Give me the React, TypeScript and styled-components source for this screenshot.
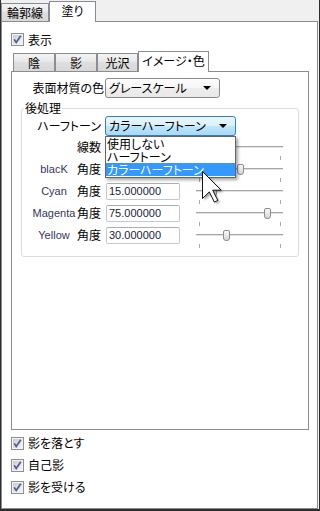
import React from 'react';
import styled, { createGlobalStyle } from 'styled-components';

const GlobalStyle = createGlobalStyle`
  html, body {
    margin: 0;
    padding: 0;
    background: #fff;
  }
  body {
    font-family: "Noto Sans CJK JP", "Noto Sans", sans-serif;
    font-size: 12px;
    color: #000;
    font-feature-settings: "palt" 1;
  }
`;

const Frame = styled.div`
  position: relative;
  width: 320px;
  height: 511px;
  box-sizing: border-box;
  display: flex;
  flex-direction: column;
  background: #f0f0f0;
  border-left: 1px solid #2e2e2e;
  border-right: 1px solid #2e2e2e;
  border-bottom: 2px solid #2e2e2e;
  overflow: hidden;
`;

const TabStrip = styled.div<{ $pad: number }>`
  display: flex;
  align-items: flex-end;
  flex-shrink: 0;
  height: ${(p) => (p.$pad ? 20 : 21)}px;
  padding-left: ${(p) => p.$pad}px;
`;

const Tab = styled.div<{ $w: number; $active?: boolean }>`
  position: relative;
  box-sizing: border-box;
  width: ${(p) => p.$w}px;
  height: ${(p) => (p.$active ? 21 : 18)}px;
  margin-bottom: ${(p) => (p.$active ? -1 : 0)}px;
  z-index: ${(p) => (p.$active ? 1 : 0)};
  border: 1px solid #898c95;
  border-bottom: none;
  background: ${(p) =>
    p.$active ? '#fff' : 'linear-gradient(#f4f4f4, #e8e8e8 45%, #dedede 50%, #d8d8d8)'};
  display: flex;
  justify-content: center;
  align-items: ${(p) => (p.$active ? 'flex-start' : 'center')};
  padding-top: ${(p) => (p.$active ? 2 : 0)}px;
  font-size: 12px;
  line-height: 14px;
  white-space: nowrap;
`;

const Panel = styled.div`
  flex: 1;
  margin-right: 1px;
  border: 1px solid #898c95;
  background: #fff;
  display: flex;
  flex-direction: column;
  padding-left: 9px;
`;

const CheckRow = styled.div<{ $h: number }>`
  display: flex;
  align-items: center;
  gap: 4px;
  height: ${(p) => p.$h}px;
  line-height: 14px;
`;

const ShowRow = styled(CheckRow)`
  margin-top: 11px;
`;

const InnerTabs = styled.div`
  margin-top: 5px;
  display: flex;
  flex-direction: column;
`;

const InnerPanel = styled.div`
  width: 298px;
  height: 359px;
  box-sizing: border-box;
  border: 1px solid #898c95;
  background: #fff;
  display: flex;
  flex-direction: column;
`;

const SurfaceRow = styled.div`
  display: flex;
  align-items: center;
  margin-top: 6px;
`;

const SurfaceLabel = styled.div`
  width: 92px;
  text-align: right;
  line-height: 14px;
`;

const Select = styled.div<{ $w: number; $focus?: boolean }>`
  position: relative;
  box-sizing: border-box;
  width: ${(p) => p.$w}px;
  height: 20px;
  margin-left: ${(p) => (p.$focus ? 0 : 1)}px;
  border: 1px solid ${(p) => (p.$focus ? '#3c7fb1' : '#8a8a8a')};
  border-radius: 3px;
  background: ${(p) =>
    p.$focus
      ? 'linear-gradient(#eaf6fd, #d9f0fc 50%, #bee6fd 50%, #a7d9f5)'
      : 'linear-gradient(#fdfdfd, #f6f6f6 50%, #ededed 50%, #e9e9e9)'};
  display: flex;
  align-items: center;
  padding-left: 3px;
  line-height: 14px;
  white-space: nowrap;
`;

const Arrow = styled.span`
  position: absolute;
  right: 8px;
  top: 7px;
  width: 0;
  height: 0;
  border-left: 4px solid transparent;
  border-right: 4px solid transparent;
  border-top: 4px solid #000;
`;

const Group = styled.fieldset`
  margin: 3px 0 0 9px;
  width: 278px;
  min-width: 0;
  box-sizing: border-box;
  border: 1px solid #d5dfe5;
  border-radius: 3px;
  padding: 1px 0 10px 0;
`;

const GroupLegend = styled.legend`
  margin-left: 2px;
  padding: 0 1px;
  font-size: 12px;
  line-height: 14px;
`;

/* label | gap | field | gap | slider */
const GroupGrid = styled.div`
  display: grid;
  grid-template-columns: 79px 4px 75px 16px 87px;
  grid-template-rows: 20px repeat(5, 22px);
  align-items: center;
`;

const LabelCell = styled.div`
  grid-column: 1;
  display: flex;
  justify-content: flex-end;
  align-items: center;
  line-height: 14px;
  white-space: nowrap;
`;

const ColorName = styled.span`
  width: 44px;
  margin-left: 10px;
  text-align: center;
  font-family: "Liberation Sans", Arial, sans-serif;
  font-size: 11px;
  color: #353560;
`;

const AngleText = styled.span`
  width: 25px;
  text-align: right;
`;

const SelectWrap = styled.div`
  grid-column: 3 / 6;
  position: relative;
  justify-self: start;
`;

const DropList = styled.div`
  position: absolute;
  left: 0;
  top: 20px;
  z-index: 5;
  width: 131px;
  box-sizing: border-box;
  border: 1px solid #646464;
  background: #fff;
  box-shadow: 2px 2px 3px rgba(0, 0, 0, 0.35);
  padding-bottom: 1px;
`;

const DropItem = styled.div<{ $sel?: boolean }>`
  height: 13px;
  line-height: 13px;
  padding-left: 1px;
  white-space: nowrap;
  background: ${(p) => (p.$sel ? '#3399ff' : 'transparent')};
  color: ${(p) => (p.$sel ? '#fff' : '#000')};
`;

const NumInput = styled.input`
  grid-column: 3;
  justify-self: end;
  box-sizing: border-box;
  width: 74px;
  min-width: 0;
  height: 17px;
  margin: 0;
  padding: 0 0 0 2px;
  border: 1px solid #c3c7cf;
  border-top-color: #abadb3;
  border-radius: 2px;
  background: #fff;
  font-family: "Liberation Sans", Arial, sans-serif;
  font-size: 11px;
  line-height: 15px;
  color: #1c1c3c;
  outline: none;
`;

const SliderBox = styled.div`
  grid-column: 5;
  position: relative;
  width: 87px;
  height: 22px;
`;

const Track = styled.div`
  position: absolute;
  left: 0;
  right: 0;
  top: 10px;
  height: 1px;
  background: #a6a6a6;
  border-bottom: 1px solid #e2e2e2;
`;

const Tick = styled.div<{ $x: number }>`
  position: absolute;
  left: ${(p) => p.$x}px;
  top: 20px;
  width: 1px;
  height: 4px;
  background: #a8a8a8;
`;

const Thumb = styled.div`
  position: absolute;
  top: 6px;
  width: 7px;
  height: 11px;
  box-sizing: border-box;
  border: 1px solid #8c8c8c;
  border-radius: 2px 2px 3px 3px;
  background: linear-gradient(#fafafa, #e4e4e4 60%, #d6d6d6);
`;

const BottomChecks = styled.div`
  margin-top: 2px;
  display: flex;
  flex-direction: column;
`;

const Cursor = styled.svg`
  position: absolute;
  left: 201px;
  top: 171px;
  z-index: 10;
  overflow: visible;
`;

const CheckBox: React.FC = () => (
  <svg width="13" height="13" viewBox="0 0 13 13">
    <defs>
      <linearGradient id="cbfill" x1="0" y1="0" x2="1" y2="1">
        <stop offset="0" stopColor="#c9cacb" />
        <stop offset="1" stopColor="#f5f5f5" />
      </linearGradient>
    </defs>
    <rect x="0.5" y="0.5" width="12" height="12" fill="#f4f4f4" stroke="#8e8f8f" />
    <rect x="2" y="2" width="9" height="9" fill="url(#cbfill)" />
    <path d="M3.2 6.4 L5.2 9.4 L9.8 2.8" stroke="#4a5d9c" strokeWidth="1.7" fill="none" />
  </svg>
);

// range 0..90 maps onto the ticks at 3px and 84px
const Slider: React.FC<{ value: number }> = ({ value }) => (
  <SliderBox>
    <Track />
    <Tick $x={3} />
    <Tick $x={84} />
    <Thumb style={{ left: Math.round((value / 90) * 81) }} />
  </SliderBox>
);

const arrowPath = 'M0 0 L0 27 L6.8 20.4 L11.9 30.6 L15.3 28.9 L10.2 18.7 L18.7 18.7 Z';

const channels = [
  { name: 'blacK', value: 45 },
  { name: 'Cyan', value: 15 },
  { name: 'Magenta', value: 75 },
  { name: 'Yellow', value: 30 },
];

const App: React.FC = () => {
  return (
    <>
      <GlobalStyle />
      <Frame>
        <TabStrip $pad={0}>
          <Tab $w={48}>輪郭線</Tab>
          <Tab $w={47} $active>塗り</Tab>
        </TabStrip>
        <Panel>
          <ShowRow $h={13}>
            <CheckBox />
            <span>表示</span>
          </ShowRow>
          <InnerTabs>
            <TabStrip $pad={2}>
              <Tab $w={42}>陰</Tab>
              <Tab $w={42}>影</Tab>
              <Tab $w={41}>光沢</Tab>
              <Tab $w={71} $active>イメージ・色</Tab>
            </TabStrip>
            <InnerPanel>
              <SurfaceRow>
                <SurfaceLabel>表面材質の色</SurfaceLabel>
                <Select $w={115}>
                  グレースケール
                  <Arrow />
                </Select>
              </SurfaceRow>
              <Group>
                <GroupLegend>後処理</GroupLegend>
                <GroupGrid>
                  <LabelCell>ハーフトーン</LabelCell>
                  <SelectWrap>
                    <Select $w={131} $focus>
                      カラーハーフトーン
                      <Arrow />
                    </Select>
                    <DropList>
                      <DropItem>使用しない</DropItem>
                      <DropItem>ハーフトーン</DropItem>
                      <DropItem $sel>カラーハーフトーン</DropItem>
                    </DropList>
                  </SelectWrap>

                  <LabelCell>線数</LabelCell>
                  <NumInput readOnly value="" />
                  <Slider value={15} />

                  {channels.map((c) => (
                    <React.Fragment key={c.name}>
                      <LabelCell>
                        <ColorName>{c.name}</ColorName>
                        <AngleText>角度</AngleText>
                      </LabelCell>
                      <NumInput readOnly value={c.value.toFixed(6)} />
                      <Slider value={c.value} />
                    </React.Fragment>
                  ))}
                </GroupGrid>
              </Group>
            </InnerPanel>
          </InnerTabs>
          <BottomChecks>
            <CheckRow $h={22}>
              <CheckBox />
              <span>影を落とす</span>
            </CheckRow>
            <CheckRow $h={22}>
              <CheckBox />
              <span>自己影</span>
            </CheckRow>
            <CheckRow $h={22}>
              <CheckBox />
              <span>影を受ける</span>
            </CheckRow>
          </BottomChecks>
        </Panel>
        <Cursor width="22" height="33" viewBox="0 0 22 33">
          <defs>
            <filter id="cursorShadow" x="-30%" y="-30%" width="160%" height="160%">
              <feGaussianBlur stdDeviation="1.2" />
            </filter>
          </defs>
          <path d={arrowPath} transform="translate(2.5 2.5)" fill="#000" opacity="0.35" filter="url(#cursorShadow)" />
          <path d={arrowPath} transform="translate(0.5 0.5)" fill="#fff" stroke="#111" strokeWidth="1" strokeLinejoin="round" />
        </Cursor>
      </Frame>
    </>
  );
};

export default App;
